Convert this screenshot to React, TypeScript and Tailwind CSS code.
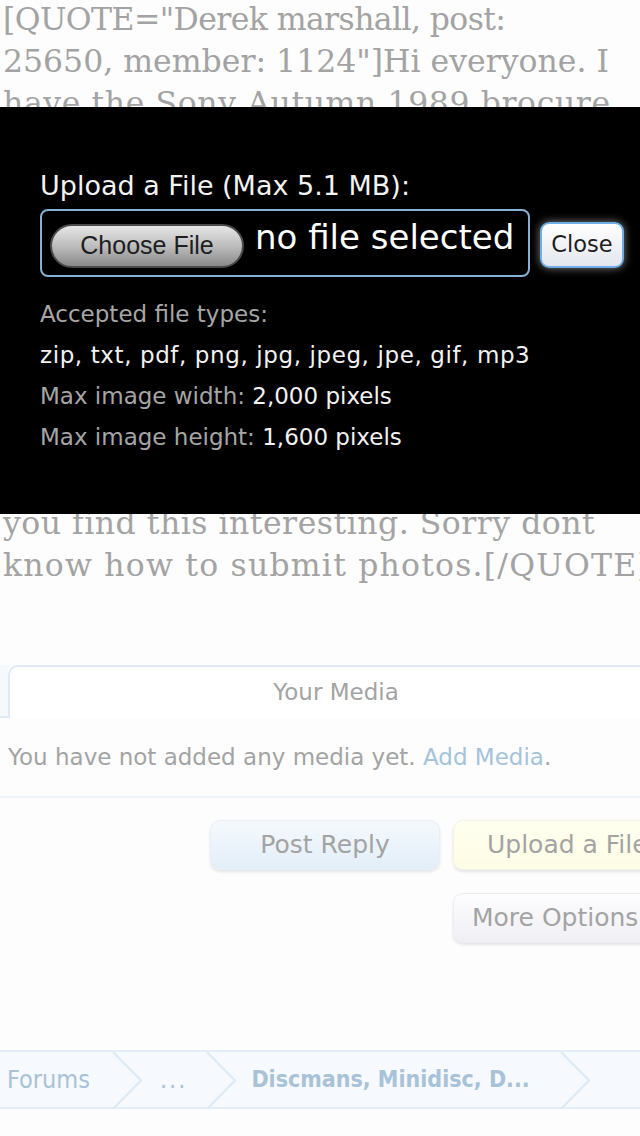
import React from "react";

const lines: { t: string; c: string }[] = [
  { t: '[QUOTE="Derek marshall, post:', c: "tracking-[-0.6px]" },
  { t: '25650, member: 1124"]Hi everyone. I', c: "" },
  { t: "have the Sony Autumn 1989 brocure", c: "tracking-[0.6px]" },
  { t: "for Discmans, CD players and the", c: "" },
  { t: "first portable CD radios. I have", c: "" },
  { t: "scanned some of the pages and it", c: "" },
  { t: "shows the range available at the", c: "" },
  { t: "time along with the prices. It is", c: "" },
  { t: "quite a nice little piece of history", c: "" },
  { t: "and I thought it would be nice to", c: "" },
  { t: "share it with the members here, I", c: "" },
  { t: "hope that some of the collectors", c: "" },
  { t: "you find this interesting. Sorry dont", c: "tracking-[0.5px]" },
  { t: "know how to submit photos.[/QUOTE]", c: "tracking-[1.2px]" },
];

function Chevron() {
  return (
    <svg width="30" height="57" viewBox="0 0 30 57" className="shrink-0">
      <polyline points="1,0 29,28.5 1,57" fill="none" stroke="#dde9f4" strokeWidth="2" />
    </svg>
  );
}

export default function App() {
  return (
    <div className="relative w-[640px] h-[1136px] overflow-hidden bg-[#fdfdfd]">
      {/* background quoted text */}
      <div className="mt-[-2px] font-['DejaVu_Serif',serif] text-[31.5px] leading-[42px] text-[#a3a3a3] pl-[3px] whitespace-nowrap">
        {lines.map((l, i) => (
          <div key={i} className={l.c}>
            {l.t}
          </div>
        ))}
      </div>

      {/* Your Media tab */}
      <div className="mt-[79px] flex font-['DejaVu_Sans',sans-serif]">
        <div className="w-[8px] h-[53px] bg-[#f6f9fc] border-b-2 border-[#dfeaf4] shrink-0" />
        <div className="w-[654px] h-[53px] shrink-0 bg-white border-l-2 border-t-2 border-[#dfeaf4] rounded-tl-[10px] flex items-center justify-center text-[23px] text-[#a3a3a3]">
          Your Media
        </div>
      </div>

      <div className="mt-[24px] pl-[8px] h-[30px] leading-[30px] text-[23px] text-[#a3a3a3] font-['DejaVu_Sans',sans-serif] whitespace-nowrap">
        You have not added any media yet. <span className="text-[#a5c3db]">Add Media</span>.
      </div>

      <div className="mt-[24px] h-[2px] bg-[#eef4f9]" />

      {/* Buttons */}
      <div className="mt-[22px] font-['DejaVu_Sans',sans-serif] text-[25px] text-[#a3a3a3] whitespace-nowrap">
        <div className="flex gap-[13px] pl-[210px]">
          <div className="w-[230px] h-[50px] shrink-0 rounded-[10px] border border-[#e8eff6] bg-gradient-to-b from-[#f5f9fd] to-[#e2eef8] shadow-[0_2px_3px_rgba(0,0,0,0.10)] flex items-center justify-center">
            Post Reply
          </div>
          <div className="w-[230px] h-[50px] shrink-0 rounded-[10px] border border-[#f4f4e4] bg-gradient-to-b from-[#ffffef] to-[#fdfde6] shadow-[0_2px_3px_rgba(0,0,0,0.10)] flex items-center pl-[33px]">
            Upload a File
          </div>
        </div>
        <div className="mt-[23px] pl-[453px] flex">
          <div className="w-[230px] h-[50px] shrink-0 rounded-[10px] border border-[#ececf2] bg-gradient-to-b from-[#fdfdfe] to-[#efeff5] shadow-[0_2px_3px_rgba(0,0,0,0.10)] flex items-center pl-[18px]">
            More Options
          </div>
        </div>
      </div>

      {/* Breadcrumb */}
      <div className="mt-[107px] h-[59px] flex items-stretch border-y-2 border-[#e3edf7] bg-[#f6f9fd] font-['DejaVu_Sans_Condensed','DejaVu_Sans',sans-serif] text-[25px] text-[#a8c2d8] whitespace-nowrap">
        <span className="pl-[7px] pr-[22px] flex items-center">Forums</span>
        <Chevron />
        <span className="pl-[18px] pr-[19px] flex items-center tracking-[2px]">...</span>
        <Chevron />
        <span className="pl-[15px] pr-[30px] flex items-center font-bold text-[23px]">Discmans, Minidisc, D...</span>
        <Chevron />
      </div>

      {/* Upload overlay */}
      <div className="absolute left-0 top-[107px] w-[640px] h-[407px] bg-black pl-[40px] font-['DejaVu_Sans',sans-serif]">
        <div className="mt-[64px] text-[27px] leading-[30px] text-[#f2f2f2] whitespace-nowrap">
          Upload a File (Max 5.1 MB):
        </div>
        <div className="mt-[8px] flex items-center gap-[10px]">
          <div className="w-[490px] h-[68px] shrink-0 rounded-[8px] border-2 border-[#86b0d4] flex items-start pl-[8px] gap-[11px] overflow-hidden">
            <div className="mt-[13px] w-[194px] h-[44px] shrink-0 rounded-full border-2 border-[#4a4a4a] bg-gradient-to-b from-[#e6e6e6] via-[#bdbdbd] to-[#8a8a8a] flex items-center justify-center font-['Liberation_Sans',sans-serif] text-[25px] text-[#1e1e1e]">
              Choose File
            </div>
            <div className="mt-[6px] text-[34px] leading-[40px] text-white whitespace-nowrap">
              no file selected
            </div>
          </div>
          <div className="w-[84px] h-[46px] shrink-0 mt-[4px] rounded-[9px] border-2 border-[#6eaee4] bg-gradient-to-b from-white to-[#e4e6ef] shadow-[0_0_8px_rgba(255,255,255,0.5)] flex items-center justify-center text-[22.5px] text-[#1e1e1e]">
            Close
          </div>
        </div>
        <div className="mt-[17px] text-[23px] leading-[41px] whitespace-nowrap">
          <div className="text-[#a6a6a6]">Accepted file types:</div>
          <div className="text-[#f2f2f2] tracking-[0.6px]">zip, txt, pdf, png, jpg, jpeg, jpe, gif, mp3</div>
          <div className="text-[#a6a6a6]">
            Max image width: <span className="text-[#f2f2f2]">2,000 pixels</span>
          </div>
          <div className="text-[#a6a6a6]">
            Max image height: <span className="text-[#f2f2f2]">1,600 pixels</span>
          </div>
        </div>
      </div>
    </div>
  );
}
